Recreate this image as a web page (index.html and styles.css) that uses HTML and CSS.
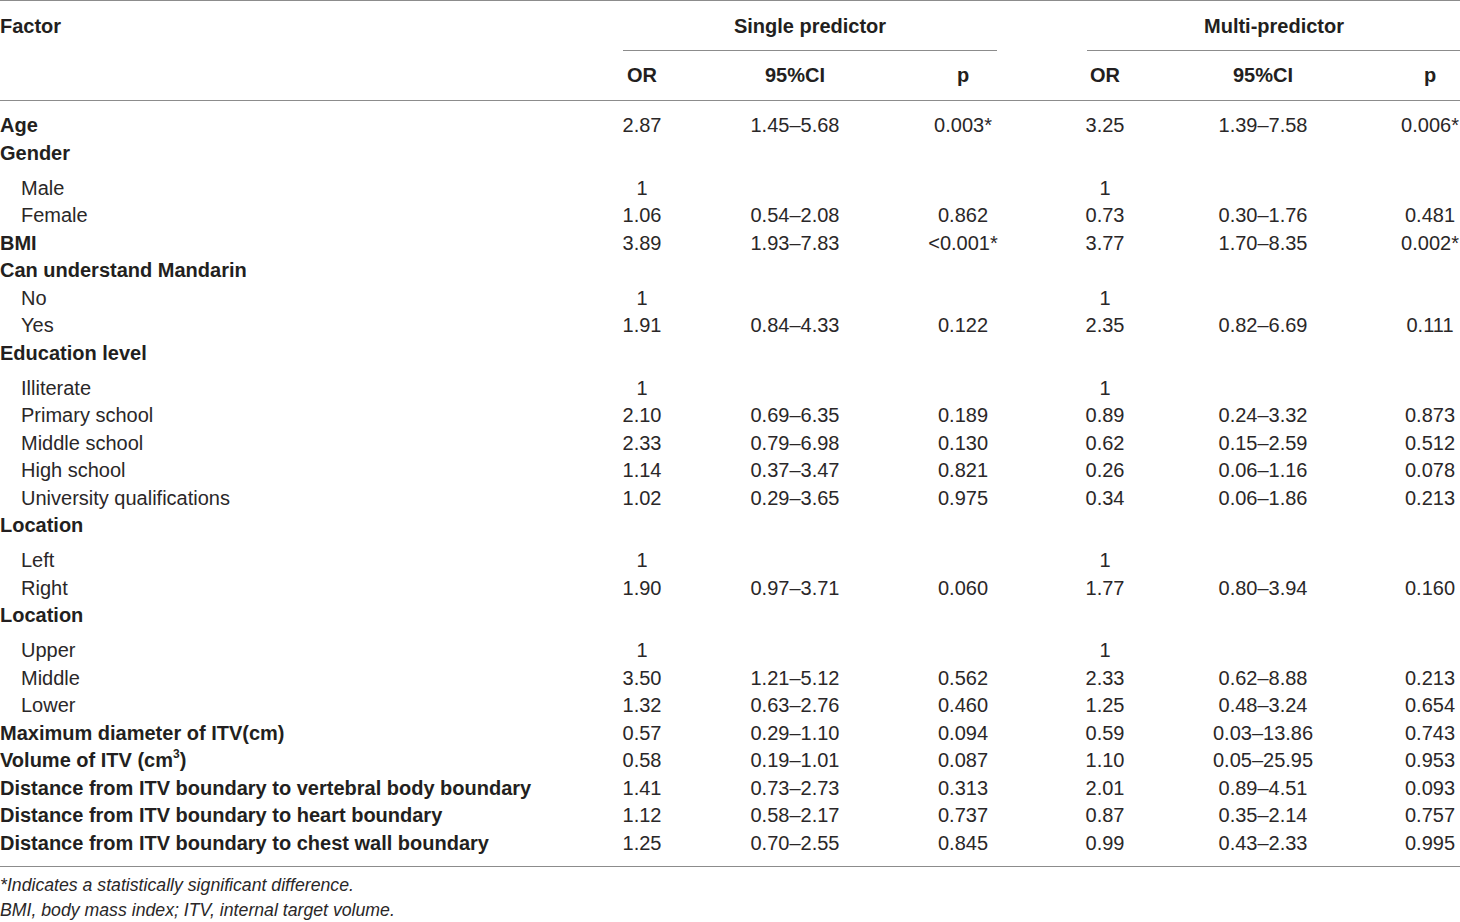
FILE: index.html
```html
<!DOCTYPE html>
<html>
<head>
<meta charset="utf-8">
<link rel="stylesheet" href="styles.css">
</head>
<body>
<div class="wrap">
<table class="tbl">
  <colgroup>
    <col class="c-factor"><col class="c-or1"><col class="c-ci1"><col class="c-p1"><col class="c-or2"><col class="c-ci2"><col class="c-p2">
  </colgroup>
  <thead>
    <tr class="h1">
      <th class="lbl">Factor</th>
      <th colspan="3"><div class="grp g1">Single predictor</div></th>
      <th colspan="3"><div class="grp g2">Multi-predictor</div></th>
    </tr>
    <tr class="h2">
      <th></th>
      <th>OR</th><th>95%CI</th><th>p</th>
      <th>OR</th><th>95%CI</th><th>p</th>
    </tr>
  </thead>
  <tbody>
    <tr class="first"><td class="lbl b">Age</td><td>2.87</td><td>1.45–5.68</td><td>0.003*</td><td>3.25</td><td>1.39–7.58</td><td>0.006*</td></tr>
    <tr class="grp-head"><td class="lbl b">Gender</td><td></td><td></td><td></td><td></td><td></td><td></td></tr>
    <tr><td class="lbl sub">Male</td><td>1</td><td></td><td></td><td>1</td><td></td><td></td></tr>
    <tr><td class="lbl sub">Female</td><td>1.06</td><td>0.54–2.08</td><td>0.862</td><td>0.73</td><td>0.30–1.76</td><td>0.481</td></tr>
    <tr><td class="lbl b">BMI</td><td>3.89</td><td>1.93–7.83</td><td>&lt;0.001*</td><td>3.77</td><td>1.70–8.35</td><td>0.002*</td></tr>
    <tr><td class="lbl b">Can understand Mandarin</td><td></td><td></td><td></td><td></td><td></td><td></td></tr>
    <tr><td class="lbl sub">No</td><td>1</td><td></td><td></td><td>1</td><td></td><td></td></tr>
    <tr><td class="lbl sub">Yes</td><td>1.91</td><td>0.84–4.33</td><td>0.122</td><td>2.35</td><td>0.82–6.69</td><td>0.111</td></tr>
    <tr class="grp-head"><td class="lbl b">Education level</td><td></td><td></td><td></td><td></td><td></td><td></td></tr>
    <tr><td class="lbl sub">Illiterate</td><td>1</td><td></td><td></td><td>1</td><td></td><td></td></tr>
    <tr><td class="lbl sub">Primary school</td><td>2.10</td><td>0.69–6.35</td><td>0.189</td><td>0.89</td><td>0.24–3.32</td><td>0.873</td></tr>
    <tr><td class="lbl sub">Middle school</td><td>2.33</td><td>0.79–6.98</td><td>0.130</td><td>0.62</td><td>0.15–2.59</td><td>0.512</td></tr>
    <tr><td class="lbl sub">High school</td><td>1.14</td><td>0.37–3.47</td><td>0.821</td><td>0.26</td><td>0.06–1.16</td><td>0.078</td></tr>
    <tr><td class="lbl sub">University qualifications</td><td>1.02</td><td>0.29–3.65</td><td>0.975</td><td>0.34</td><td>0.06–1.86</td><td>0.213</td></tr>
    <tr class="grp-head"><td class="lbl b">Location</td><td></td><td></td><td></td><td></td><td></td><td></td></tr>
    <tr><td class="lbl sub">Left</td><td>1</td><td></td><td></td><td>1</td><td></td><td></td></tr>
    <tr><td class="lbl sub">Right</td><td>1.90</td><td>0.97–3.71</td><td>0.060</td><td>1.77</td><td>0.80–3.94</td><td>0.160</td></tr>
    <tr class="grp-head"><td class="lbl b">Location</td><td></td><td></td><td></td><td></td><td></td><td></td></tr>
    <tr><td class="lbl sub">Upper</td><td>1</td><td></td><td></td><td>1</td><td></td><td></td></tr>
    <tr><td class="lbl sub">Middle</td><td>3.50</td><td>1.21–5.12</td><td>0.562</td><td>2.33</td><td>0.62–8.88</td><td>0.213</td></tr>
    <tr><td class="lbl sub">Lower</td><td>1.32</td><td>0.63–2.76</td><td>0.460</td><td>1.25</td><td>0.48–3.24</td><td>0.654</td></tr>
    <tr><td class="lbl b">Maximum diameter of ITV(cm)</td><td>0.57</td><td>0.29–1.10</td><td>0.094</td><td>0.59</td><td>0.03–13.86</td><td>0.743</td></tr>
    <tr><td class="lbl b">Volume of ITV (cm<sup>3</sup>)</td><td>0.58</td><td>0.19–1.01</td><td>0.087</td><td>1.10</td><td>0.05–25.95</td><td>0.953</td></tr>
    <tr><td class="lbl b">Distance from ITV boundary to vertebral body boundary</td><td>1.41</td><td>0.73–2.73</td><td>0.313</td><td>2.01</td><td>0.89–4.51</td><td>0.093</td></tr>
    <tr><td class="lbl b">Distance from ITV boundary to heart boundary</td><td>1.12</td><td>0.58–2.17</td><td>0.737</td><td>0.87</td><td>0.35–2.14</td><td>0.757</td></tr>
    <tr class="last"><td class="lbl b">Distance from ITV boundary to chest wall boundary</td><td>1.25</td><td>0.70–2.55</td><td>0.845</td><td>0.99</td><td>0.43–2.33</td><td>0.995</td></tr>
  </tbody>
</table>
<div class="notes">
  <p>*Indicates a statistically significant difference.</p>
  <p>BMI, body mass index; ITV, internal target volume.</p>
</div>
</div>
</body>
</html>
```

FILE: styles.css
```css
html, body {
  margin: 0;
  padding: 0;
  background: #ffffff;
  overflow: hidden;
}
.wrap {
  width: 1500px;
  font-family: "Liberation Sans", Arial, sans-serif;
  color: #231f20;
}
.tbl {
  width: 1500px;
  border-collapse: collapse;
  table-layout: fixed;
  font-size: 20px;
}
.c-factor { width: 576px; }
.c-or1 { width: 132px; }
.c-ci1 { width: 174px; }
.c-p1 { width: 162px; }
.c-or2 { width: 122px; }
.c-ci2 { width: 194px; }
.c-p2 { width: 140px; }

.tbl th {
  font-weight: bold;
  padding: 0;
}
.tbl thead tr.h1 th {
  border-top: 1.5px solid #8c8c8c;
  vertical-align: top;
}
.tbl thead tr.h1 th.lbl {
  padding-top: 14px;
  line-height: 22px;
}
.grp {
  padding: 14px 0 13px;
  border-bottom: 1.5px solid #8c8c8c;
  text-align: center;
  line-height: 22px;
}
.g1 { margin: 0 47px; }
.g2 { margin: 0 39px 0 43px; }
.tbl thead tr.h2 th {
  line-height: 49px;
  text-align: center;
  vertical-align: middle;
  border-bottom: 1.5px solid #8c8c8c;
}
.tbl th.lbl, .tbl td.lbl {
  text-align: left;
}
.tbl td {
  padding: 0;
  line-height: 27.5px;
  text-align: center;
  white-space: nowrap;
  color: #2a2728;
}
.tbl td.b {
  font-weight: bold;
  color: #231f20;
}
.tbl td.sub { padding-left: 21px; }
.tbl tr.first td { padding-top: 11px; }
.tbl tr.grp-head td { padding-bottom: 7.5px; }
.tbl tr.last td {
  padding-bottom: 9px;
  border-bottom: 1.5px solid #8c8c8c;
}
sup {
  font-size: 12px;
  line-height: 0;
  vertical-align: 9px;
}
.notes {
  font-style: italic;
  font-size: 17.7px;
  padding-top: 6px;
  color: #2a2728;
}
.notes p {
  margin: 0;
  line-height: 25px;
}
```
